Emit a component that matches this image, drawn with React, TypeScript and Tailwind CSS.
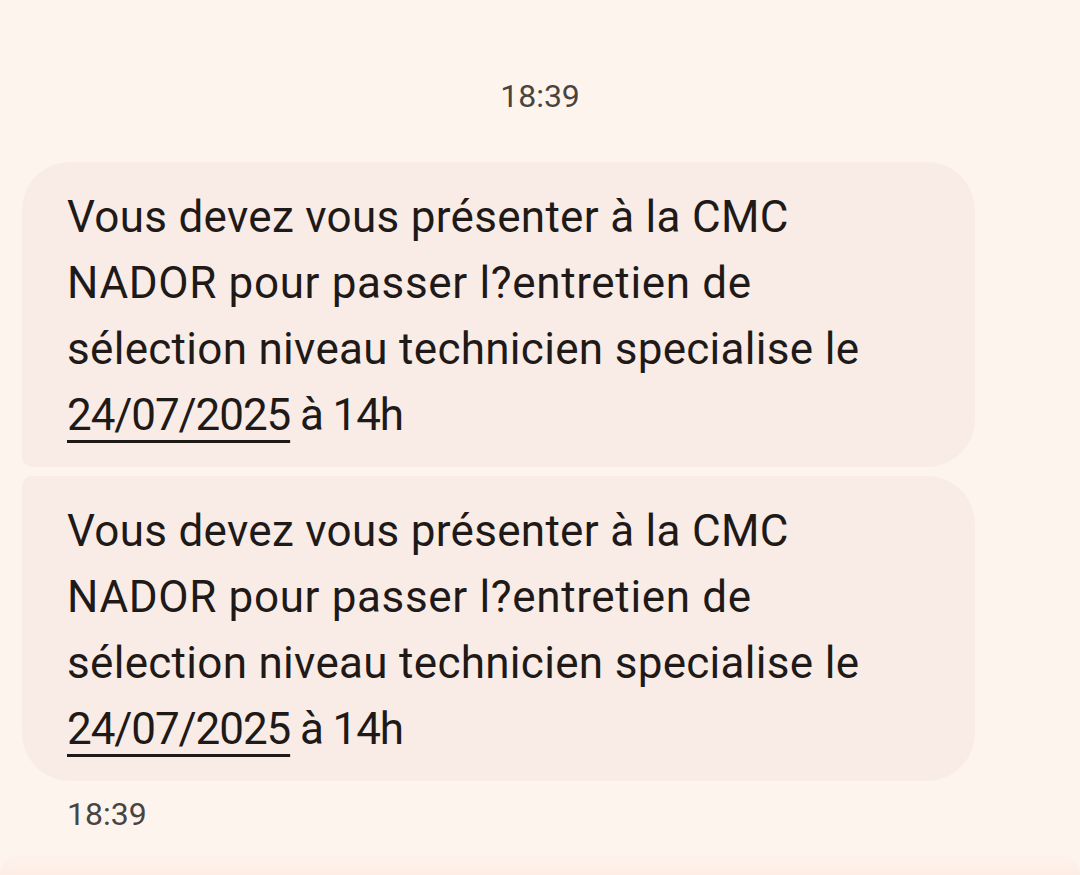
const LINES = [
  { text: 'Vous devez vous présenter à la CMC', track: 'tracking-[0.3px]' },
  { text: 'NADOR pour passer l?entretien de', track: 'tracking-[0.65px]' },
  { text: 'sélection niveau technicien specialise le', track: 'tracking-[0.3px]' },
]

function Bubble({ shape }: { shape: string }) {
  return (
    <div className={`w-[953px] bg-[#f9ece7] px-[45px] pt-[22px] pb-[19px] ${shape}`}>
      <p className="text-[44px] leading-[66px] text-[#1f1a17]">
        {LINES.map((line) => (
          <span key={line.text} className={`block whitespace-nowrap ${line.track}`}>
            {line.text}
          </span>
        ))}
        <span className="block whitespace-nowrap tracking-[-1.1px]">
          <span className="underline decoration-[3px] underline-offset-[10px]">24/07/2025</span> à 14h
        </span>
      </p>
    </div>
  )
}

export default function App() {
  return (
    <div
      className="relative h-[875px] w-[1080px] overflow-hidden bg-[#fdf5ed]"
      style={{ fontFamily: 'Roboto, "Noto Sans", sans-serif' }}
    >
      <div className="flex flex-col pl-[22px]">
        <div className="flex h-[162px] items-center justify-center pr-[22px] pt-[30px] text-[32px] text-[#4a4440]">
          18:39
        </div>
        <div className="flex flex-col gap-[9px]">
          <Bubble shape="rounded-t-[48px] rounded-br-[48px] rounded-bl-[10px]" />
          <Bubble shape="rounded-b-[48px] rounded-tr-[48px] rounded-tl-[10px]" />
        </div>
        <div className="pl-[45px] pt-[13px] text-[32px] leading-[40px] text-[#4a4440]">18:39</div>
      </div>
      <div className="absolute inset-x-0 bottom-0 h-[20px] rounded-t-[24px] bg-gradient-to-b from-[#fdf3ec] to-[#fdede5]" />
    </div>
  )
}
